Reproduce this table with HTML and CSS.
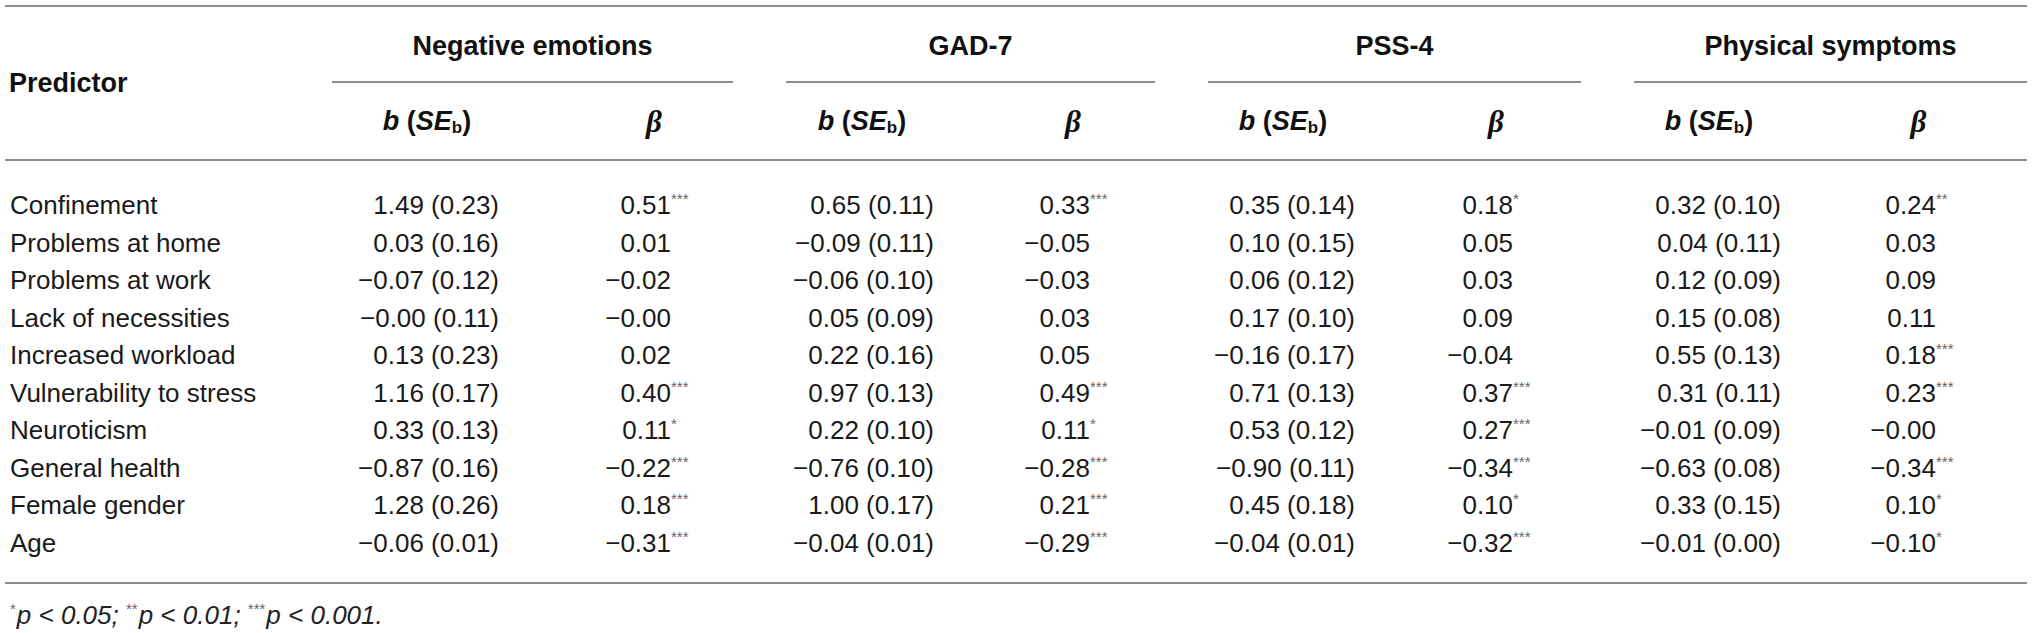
FILE: index.html
```html
<!DOCTYPE html>
<html lang="en">
<head>
  <meta charset="UTF-8">
  <title>Regression results</title>
  <link rel="stylesheet" href="styles.css">
</head>
<body>
  <table class="results">
    <colgroup>
      <col class="col-pred">
      <col class="col-b1"><col class="col-beta1">
      <col class="col-b2"><col class="col-beta2">
      <col class="col-b3"><col class="col-beta3">
      <col class="col-b4"><col class="col-beta4">
    </colgroup>
    <thead>
      <tr class="group-row">
        <th rowspan="2" class="pred-head">Predictor</th>
        <th colspan="2"><div class="group-label">Negative emotions</div></th>
        <th colspan="2"><div class="group-label">GAD-7</div></th>
        <th colspan="2"><div class="group-label">PSS-4</div></th>
        <th colspan="2"><div class="group-label last">Physical symptoms</div></th>
      </tr>
      <tr class="sub-row">
        <th><i>b</i> (<i>SE</i><sub>b</sub>)</th><th class="beta">β</th>
        <th><i>b</i> (<i>SE</i><sub>b</sub>)</th><th class="beta">β</th>
        <th><i>b</i> (<i>SE</i><sub>b</sub>)</th><th class="beta">β</th>
        <th><i>b</i> (<i>SE</i><sub>b</sub>)</th><th class="beta">β</th>
      </tr>
    </thead>
    <tbody>
      <tr>
        <td>Confinement</td>
        <td>1.49 (0.23)</td><td>0.51<span class="sig">***</span></td>
        <td>0.65 (0.11)</td><td>0.33<span class="sig">***</span></td>
        <td>0.35 (0.14)</td><td>0.18<span class="sig">*</span></td>
        <td>0.32 (0.10)</td><td>0.24<span class="sig">**</span></td>
      </tr>
      <tr>
        <td>Problems at home</td>
        <td>0.03 (0.16)</td><td>0.01</td>
        <td>−0.09 (0.11)</td><td>−0.05</td>
        <td>0.10 (0.15)</td><td>0.05</td>
        <td>0.04 (0.11)</td><td>0.03</td>
      </tr>
      <tr>
        <td>Problems at work</td>
        <td>−0.07 (0.12)</td><td>−0.02</td>
        <td>−0.06 (0.10)</td><td>−0.03</td>
        <td>0.06 (0.12)</td><td>0.03</td>
        <td>0.12 (0.09)</td><td>0.09</td>
      </tr>
      <tr>
        <td>Lack of necessities</td>
        <td>−0.00 (0.11)</td><td>−0.00</td>
        <td>0.05 (0.09)</td><td>0.03</td>
        <td>0.17 (0.10)</td><td>0.09</td>
        <td>0.15 (0.08)</td><td>0.11</td>
      </tr>
      <tr>
        <td>Increased workload</td>
        <td>0.13 (0.23)</td><td>0.02</td>
        <td>0.22 (0.16)</td><td>0.05</td>
        <td>−0.16 (0.17)</td><td>−0.04</td>
        <td>0.55 (0.13)</td><td>0.18<span class="sig">***</span></td>
      </tr>
      <tr>
        <td>Vulnerability to stress</td>
        <td>1.16 (0.17)</td><td>0.40<span class="sig">***</span></td>
        <td>0.97 (0.13)</td><td>0.49<span class="sig">***</span></td>
        <td>0.71 (0.13)</td><td>0.37<span class="sig">***</span></td>
        <td>0.31 (0.11)</td><td>0.23<span class="sig">***</span></td>
      </tr>
      <tr>
        <td>Neuroticism</td>
        <td>0.33 (0.13)</td><td>0.11<span class="sig">*</span></td>
        <td>0.22 (0.10)</td><td>0.11<span class="sig">*</span></td>
        <td>0.53 (0.12)</td><td>0.27<span class="sig">***</span></td>
        <td>−0.01 (0.09)</td><td>−0.00</td>
      </tr>
      <tr>
        <td>General health</td>
        <td>−0.87 (0.16)</td><td>−0.22<span class="sig">***</span></td>
        <td>−0.76 (0.10)</td><td>−0.28<span class="sig">***</span></td>
        <td>−0.90 (0.11)</td><td>−0.34<span class="sig">***</span></td>
        <td>−0.63 (0.08)</td><td>−0.34<span class="sig">***</span></td>
      </tr>
      <tr>
        <td>Female gender</td>
        <td>1.28 (0.26)</td><td>0.18<span class="sig">***</span></td>
        <td>1.00 (0.17)</td><td>0.21<span class="sig">***</span></td>
        <td>0.45 (0.18)</td><td>0.10<span class="sig">*</span></td>
        <td>0.33 (0.15)</td><td>0.10<span class="sig">*</span></td>
      </tr>
      <tr>
        <td>Age</td>
        <td>−0.06 (0.01)</td><td>−0.31<span class="sig">***</span></td>
        <td>−0.04 (0.01)</td><td>−0.29<span class="sig">***</span></td>
        <td>−0.04 (0.01)</td><td>−0.32<span class="sig">***</span></td>
        <td>−0.01 (0.00)</td><td>−0.10<span class="sig">*</span></td>
      </tr>
    </tbody>
  </table>
  <p class="note"><span class="sig">*</span>p &lt; 0.05; <span class="sig">**</span>p &lt; 0.01; <span class="sig">***</span>p &lt; 0.001.</p>
</body>
</html>
```

FILE: styles.css
```css
/* General Reset */
* {
  margin: 0;
  padding: 0;
  box-sizing: border-box;
}
body {
  font-family: "Liberation Sans", Arial, sans-serif;
  background-color: #fff;
  color: #1a1a1a;
}
.results {
  margin: 5px 0 0 5px;
  width: 2022px;
  table-layout: fixed;
  border-collapse: collapse;
  border-top: 2px solid #8c8c8c;
  font-size: 26px;
}
.col-pred { width: 301px; }
.col-b1 { width: 242px; }
.col-beta1 { width: 212px; }
.col-b2 { width: 204px; }
.col-beta2 { width: 218px; }
.col-b3 { width: 202px; }
.col-beta3 { width: 224px; }
.col-b4 { width: 202px; }
.col-beta4 { width: 217px; }

/* Header */
.results thead {
  border-bottom: 2px solid #8c8c8c;
}
.results th {
  font-size: 27px;
  font-weight: bold;
  text-align: center;
  white-space: nowrap;
  color: #111;
}
.group-row th {
  height: 77px;
  vertical-align: bottom;
}
.group-row .pred-head {
  text-align: left;
  padding-left: 4px;
  vertical-align: middle;
}
.group-label {
  margin: 0 27px 0 26px;
  height: 76px;
  line-height: 78px;
  border-bottom: 2px solid #8c8c8c;
}
.group-label.last {
  margin-right: 0;
}
.sub-row th {
  height: 77px;
  padding-top: 2px;
}
.sub-row sub {
  font-size: 17px;
  vertical-align: -3px;
  font-style: normal;
}
.sub-row .beta {
  font-family: "Liberation Serif", "Times New Roman", serif;
  font-style: italic;
  font-size: 31px;
}

/* Body */
.results td {
  line-height: 37.5px;
  text-align: right;
  white-space: nowrap;
}
.results td:first-child {
  text-align: left;
  padding-left: 5px;
}
.results td:nth-child(2) { padding-right: 49px; }
.results td:nth-child(3) { padding-right: 89px; }
.results td:nth-child(4) { padding-right: 30px; }
.results td:nth-child(5) { padding-right: 92px; }
.results td:nth-child(6) { padding-right: 29px; }
.results td:nth-child(7) { padding-right: 95px; }
.results td:nth-child(8) { padding-right: 29px; }
.results td:nth-child(9) { padding-right: 91px; }
.results tbody tr:first-child td {
  padding-top: 26px;
}
.results tbody tr:last-child td {
  padding-bottom: 20px;
}
.results tbody {
  border-bottom: 2px solid #8c8c8c;
}
.sig {
  display: inline-block;
  width: 0;
  font-size: 15px;
  line-height: 1;
  vertical-align: 10px;
  color: #666;
  font-style: normal;
}

/* Footnote */
.note {
  margin: 16px 0 0 10px;
  font-size: 26px;
  font-style: italic;
  line-height: 30px;
  color: #222;
}
.note .sig {
  width: auto;
  margin-right: 1px;
}
```
